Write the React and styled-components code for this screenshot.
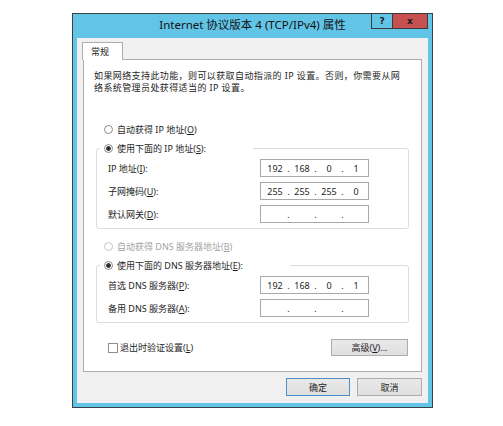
import React from "react";
import styled, { createGlobalStyle } from "styled-components";

const FONT = `"Noto Sans", "Noto Sans CJK SC", sans-serif`;

const GlobalStyle = createGlobalStyle`
  html, body { margin: 0; padding: 0; background: #ffffff; }
  body { font-family: ${FONT}; }
  *, *::before, *::after { box-sizing: border-box; }
`;

const Page = styled.div`
  width: 503px;
  height: 426px;
  padding: 13px 0 0 72px;
  background: #ffffff;
`;

const Window = styled.div`
  width: 361px;
  height: 395px;
  border: 1px solid #3a4246;
  background: #62c5e8;
  padding: 0 4px 4px 4px;
  display: flex;
  flex-direction: column;
`;

const TitleBar = styled.div`
  height: 24px;
  flex: none;
  display: grid;
  grid-template-columns: 1fr auto 1fr;
  align-items: start;
`;

const TitleText = styled.div`
  grid-column: 2;
  font-family: ${FONT};
  font-size: 11.5px;
  line-height: 22px;
  color: #111;
  white-space: nowrap;
`;

const CaptionButtons = styled.div`
  grid-column: 3;
  justify-self: end;
  display: flex;
  margin-top: -1px;
`;

const CaptionButton = styled.div`
  width: ${(p) => p.$w}px;
  height: 16px;
  margin-left: ${(p) => (p.$close ? -1 : 0)}px;
  border: 1px solid #3a3a3a;
  background: ${(p) => (p.$close ? "#c75050" : "#62c5e8")};
  display: flex;
  align-items: center;
  justify-content: center;
  font-family: "DejaVu Sans", sans-serif;
  font-weight: bold;
  font-size: 9px;
  line-height: 1;
  color: #1a1a1a;
`;

const Client = styled.div`
  flex: 1;
  background: #f0f0f0;
  display: flex;
  flex-direction: column;
  padding: 4px 6px 7px 6px;
  font-family: ${FONT};
  font-size: 9px;
  color: #1e1e1e;
`;

const TabStrip = styled.div`
  display: flex;
  margin-left: -1px;
`;

const Tab = styled.div`
  position: relative;
  z-index: 1;
  width: 41px;
  height: 18px;
  margin-bottom: -1px;
  padding-left: 8px;
  border: 1px solid #adadad;
  border-bottom: none;
  background: #ffffff;
  line-height: 17px;
`;

const Panel = styled.div`
  flex: 1;
  background: #ffffff;
  border: 1px solid #adadad;
  padding: 10px 10px 0 10px;
  display: flex;
  flex-direction: column;
`;

const Description = styled.p`
  margin: 0;
  line-height: 12px;
  letter-spacing: 0.4px;
  white-space: nowrap;
`;

const RadioRow = styled.div`
  height: 18px;
  display: flex;
  align-items: center;
  gap: 4px;
  margin: ${(p) => p.$mt || 0}px 0 0 10px;
  white-space: nowrap;
  color: ${(p) => (p.$disabled ? "#a3a3a3" : "#1e1e1e")};
`;

const RadioMark = styled.span`
  flex: none;
  width: 9px;
  height: 9px;
  border-radius: 50%;
  border: 1px solid ${(p) => (p.$disabled ? "#c4c4c4" : "#8a8a8a")};
  background: ${(p) =>
    p.$checked
      ? "radial-gradient(circle, #2e2e2e 0 2px, #ffffff 2.6px)"
      : "#ffffff"};
`;

const Group = styled.fieldset`
  margin: 1px 2px 0 2px;
  padding: 2px 39px 5px 11px;
  border: 1px solid #dcdcdc;
  border-radius: 3px;
  min-width: 0;
`;

const Legend = styled.legend`
  width: ${(p) => p.$w}px;
  height: 18px;
  margin-left: -8px;
  padding: 0 0 0 4px;
  display: flex;
  align-items: center;
  gap: 4px;
  white-space: nowrap;
  background: #ffffff;
`;

const FieldList = styled.div`
  display: grid;
  gap: 5px;
`;

const FieldRow = styled.div`
  height: 18px;
  display: flex;
  align-items: center;
  justify-content: space-between;
`;

const FieldLabel = styled.span`
  white-space: nowrap;
`;

const IpBox = styled.div`
  width: 109px;
  height: 18px;
  border: 1px solid #a9a9a9;
  background: #ffffff;
  display: flex;
  align-items: center;
  padding-left: 3px;
  font-size: 9px;
  color: #1e1e1e;
`;

const Octet = styled.span`
  width: 22px;
  text-align: center;
`;

const Dot = styled.span`
  width: 5px;
  text-align: center;
`;

const FooterRow = styled.div`
  margin-top: 16px;
  height: 17px;
  display: flex;
  align-items: center;
  justify-content: space-between;
`;

const CheckLabel = styled.div`
  display: flex;
  align-items: center;
  gap: 2px;
  margin-left: 14px;
  white-space: nowrap;
`;

const CheckMark = styled.span`
  width: 10px;
  height: 10px;
  border: 1px solid #8e8f8f;
  background: #ffffff;
`;

const Button = styled.div`
  width: ${(p) => p.$w}px;
  height: ${(p) => p.$h}px;
  margin-right: ${(p) => p.$mr || 0}px;
  border: 1px solid ${(p) => (p.$default ? "#4f8fc7" : "#acacac")};
  background: linear-gradient(#e9e9e9, #dfdfdf);
  display: flex;
  align-items: center;
  justify-content: center;
  font-size: 9px;
  color: #1e1e1e;
  white-space: nowrap;
`;

const DialogButtons = styled.div`
  margin-top: 6px;
  display: flex;
  justify-content: flex-end;
  gap: 7px;
`;

function IpField({ parts }) {
  return (
    <IpBox>
      {parts.map((p, i) => (
        <React.Fragment key={i}>
          {i > 0 && <Dot>.</Dot>}
          <Octet>{p}</Octet>
        </React.Fragment>
      ))}
    </IpBox>
  );
}

export default function App() {
  return (
    <>
      <GlobalStyle />
      <Page>
        <Window>
          <TitleBar>
            <TitleText>Internet 协议版本 4 (TCP/IPv4) 属性</TitleText>
            <CaptionButtons>
              <CaptionButton $w={22}>?</CaptionButton>
              <CaptionButton $w={36} $close>x</CaptionButton>
            </CaptionButtons>
          </TitleBar>
          <Client>
            <TabStrip>
              <Tab>常规</Tab>
            </TabStrip>
            <Panel>
              <Description>
                如果网络支持此功能，则可以获取自动指派的 IP 设置。否则，你需要从网
                <br />
                络系统管理员处获得适当的 IP 设置。
              </Description>
              <RadioRow $mt={26}>
                <RadioMark />
                <span>
                  自动获得 IP 地址(<u>O</u>)
                </span>
              </RadioRow>
              <Group>
                <Legend $w={153}>
                  <RadioMark $checked />
                  <span>
                    使用下面的 IP 地址(<u>S</u>):
                  </span>
                </Legend>
                <FieldList>
                  <FieldRow>
                    <FieldLabel>
                      IP 地址(<u>I</u>):
                    </FieldLabel>
                    <IpField parts={["192", "168", "0", "1"]} />
                  </FieldRow>
                  <FieldRow>
                    <FieldLabel>
                      子网掩码(<u>U</u>):
                    </FieldLabel>
                    <IpField parts={["255", "255", "255", "0"]} />
                  </FieldRow>
                  <FieldRow>
                    <FieldLabel>
                      默认网关(<u>D</u>):
                    </FieldLabel>
                    <IpField parts={["", "", "", ""]} />
                  </FieldRow>
                </FieldList>
              </Group>
              <RadioRow $mt={8} $disabled>
                <RadioMark $disabled />
                <span>
                  自动获得 DNS 服务器地址(<u>B</u>)
                </span>
              </RadioRow>
              <Group>
                <Legend $w={190}>
                  <RadioMark $checked />
                  <span>
                    使用下面的 DNS 服务器地址(<u>E</u>):
                  </span>
                </Legend>
                <FieldList>
                  <FieldRow>
                    <FieldLabel>
                      首选 DNS 服务器(<u>P</u>):
                    </FieldLabel>
                    <IpField parts={["192", "168", "0", "1"]} />
                  </FieldRow>
                  <FieldRow>
                    <FieldLabel>
                      备用 DNS 服务器(<u>A</u>):
                    </FieldLabel>
                    <IpField parts={["", "", "", ""]} />
                  </FieldRow>
                </FieldList>
              </Group>
              <FooterRow>
                <CheckLabel>
                  <CheckMark />
                  <span>
                    退出时验证设置(<u>L</u>)
                  </span>
                </CheckLabel>
                <Button $w={77} $h={17} $mr={3}>
                  高级(<u>V</u>)...
                </Button>
              </FooterRow>
            </Panel>
            <DialogButtons>
              <Button $w={64} $h={18} $default>
                确定
              </Button>
              <Button $w={65} $h={18}>
                取消
              </Button>
            </DialogButtons>
          </Client>
        </Window>
      </Page>
    </>
  );
}
